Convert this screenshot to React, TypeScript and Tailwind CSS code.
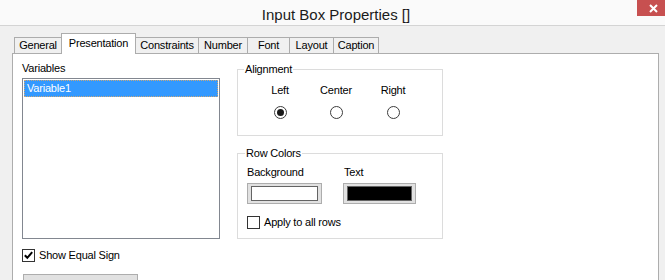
import React from "react";

const tabs = [
  { label: "General", cls: "w-[47px] h-[16px] border-l border-t bg-[#f0f0f0]" },
  { label: "Presentation", cls: "w-[75px] h-[21px] -mb-px relative z-10 border-l border-t border-r bg-white pb-[2px]" },
  { label: "Constraints", cls: "w-[63px] h-[16px] border-t border-r bg-[#f0f0f0]" },
  { label: "Number", cls: "w-[49px] h-[16px] border-t border-r bg-[#f0f0f0]" },
  { label: "Font", cls: "w-[42px] h-[16px] border-t border-r bg-[#f0f0f0]" },
  { label: "Layout", cls: "w-[44px] h-[16px] border-t border-r bg-[#f0f0f0]" },
  { label: "Caption", cls: "w-[45px] h-[16px] border-t border-r bg-[#f0f0f0]" },
];

function Radio({ checked }: { checked?: boolean }) {
  return (
    <span className="w-[13px] h-[13px] rounded-full border border-[#3c3c3c] bg-white flex items-center justify-center">
      {checked && <span className="w-[7px] h-[7px] rounded-full bg-[#1a1a1a]" />}
    </span>
  );
}

function Checkbox({ checked }: { checked?: boolean }) {
  return (
    <span className="w-[13px] h-[13px] border border-[#333333] bg-white flex items-center justify-center shrink-0">
      {checked && (
        <svg width="11" height="11" viewBox="0 0 11 11">
          <polyline points="1.8,5.2 4.3,7.8 9.2,2.2" fill="none" stroke="#000" strokeWidth="2" />
        </svg>
      )}
    </span>
  );
}

function Swatch({ w, fill }: { w: string; fill: string }) {
  return (
    <div className={`${w} h-[21px] border border-[#adadad] bg-[#e1e1e1] px-[3px] py-[2px]`}>
      <div className={`h-full border border-[#646464] ${fill}`} />
    </div>
  );
}

export default function App() {
  return (
    <div className="w-[665px] h-[280px] overflow-hidden bg-[#f0f0f0] flex flex-col font-['Liberation_Sans',Arial,sans-serif] text-[11px] leading-[13px] tracking-[-0.2px] text-black relative">
      {/* title bar */}
      <div className="h-[26px] shrink-0 bg-[#fafafa] border-b border-[#d4d4d4] flex justify-center pt-[6px] pl-[7px]">
        <span className="text-[15px] leading-[17px] tracking-normal text-[#1b1b1b]">Input Box Properties []</span>
      </div>
      <div className="absolute top-0 right-0 w-[28px] h-[16px] bg-[#c75050] flex items-center pl-[12px]">
        <svg width="9" height="9" viewBox="0 0 9 9">
          <path d="M1 1 L8 8 M8 1 L1 8" stroke="#fff" strokeWidth="2" />
        </svg>
      </div>

      {/* tabs */}
      <div className="h-[27px] shrink-0 flex items-end pl-[14px]">
        {tabs.map((t) => (
          <div key={t.label} className={`${t.cls} border-[#acacac] flex items-center justify-center`}>
            {t.label}
          </div>
        ))}
      </div>

      {/* panel */}
      <div className="ml-[12px] w-[647px] h-[280px] shrink-0 border border-[#adadad] bg-white flex items-start pl-[9px] pt-[8px]">
        {/* left column */}
        <div className="w-[198px] shrink-0 flex flex-col">
          <div className="shrink-0">Variables</div>
          <div className="shrink-0 mt-[3px] h-[161px] border border-[#828790] p-px">
            <div className="h-[17px] bg-[#3399ff] border border-dotted border-[#c9a77a] text-white pl-[2px] leading-[14px]">
              Variable1
            </div>
          </div>
          <div className="shrink-0 mt-[10px] flex items-center gap-[4px]">
            <Checkbox checked />
            <span>Show Equal Sign</span>
          </div>
          <div className="shrink-0 mt-[12px] ml-px w-[115px] h-[22px] border border-[#adadad] bg-[#e1e1e1]" />
        </div>

        {/* right column */}
        <div className="ml-[17px] w-[206px] shrink-0 flex flex-col pt-[7px]">
          {/* Alignment */}
          <div className="h-[67px] shrink-0 border border-[#dcdcdc]">
            <div className="-mt-[7px] ml-[6px] px-px bg-white w-fit">Alignment</div>
            <div className="flex mt-[8px] pl-[14px]">
              <div className="w-[56px] flex flex-col items-center">
                <span>Left</span>
                <div className="mt-[9px]"><Radio checked /></div>
              </div>
              <div className="w-[56px] flex flex-col items-center">
                <span>Center</span>
                <div className="mt-[9px]"><Radio /></div>
              </div>
              <div className="w-[58px] flex flex-col items-center">
                <span>Right</span>
                <div className="mt-[9px]"><Radio /></div>
              </div>
            </div>
          </div>

          {/* Row Colors */}
          <div className="mt-[17px] h-[86px] shrink-0 border border-[#dcdcdc]">
            <div className="-mt-[7px] ml-[7px] px-px bg-white w-fit">Row Colors</div>
            <div className="flex mt-[6px] pl-[9px]">
              <div className="w-[97px] flex flex-col">
                <span>Background</span>
                <div className="mt-[4px]"><Swatch w="w-[75px]" fill="bg-white" /></div>
              </div>
              <div className="flex flex-col">
                <span>Text</span>
                <div className="mt-[4px] -ml-px"><Swatch w="w-[73px]" fill="bg-black" /></div>
              </div>
            </div>
            <div className="mt-[12px] ml-[9px] flex items-center gap-[4px]">
              <Checkbox />
              <span>Apply to all rows</span>
            </div>
          </div>
        </div>
      </div>
    </div>
  );
}
